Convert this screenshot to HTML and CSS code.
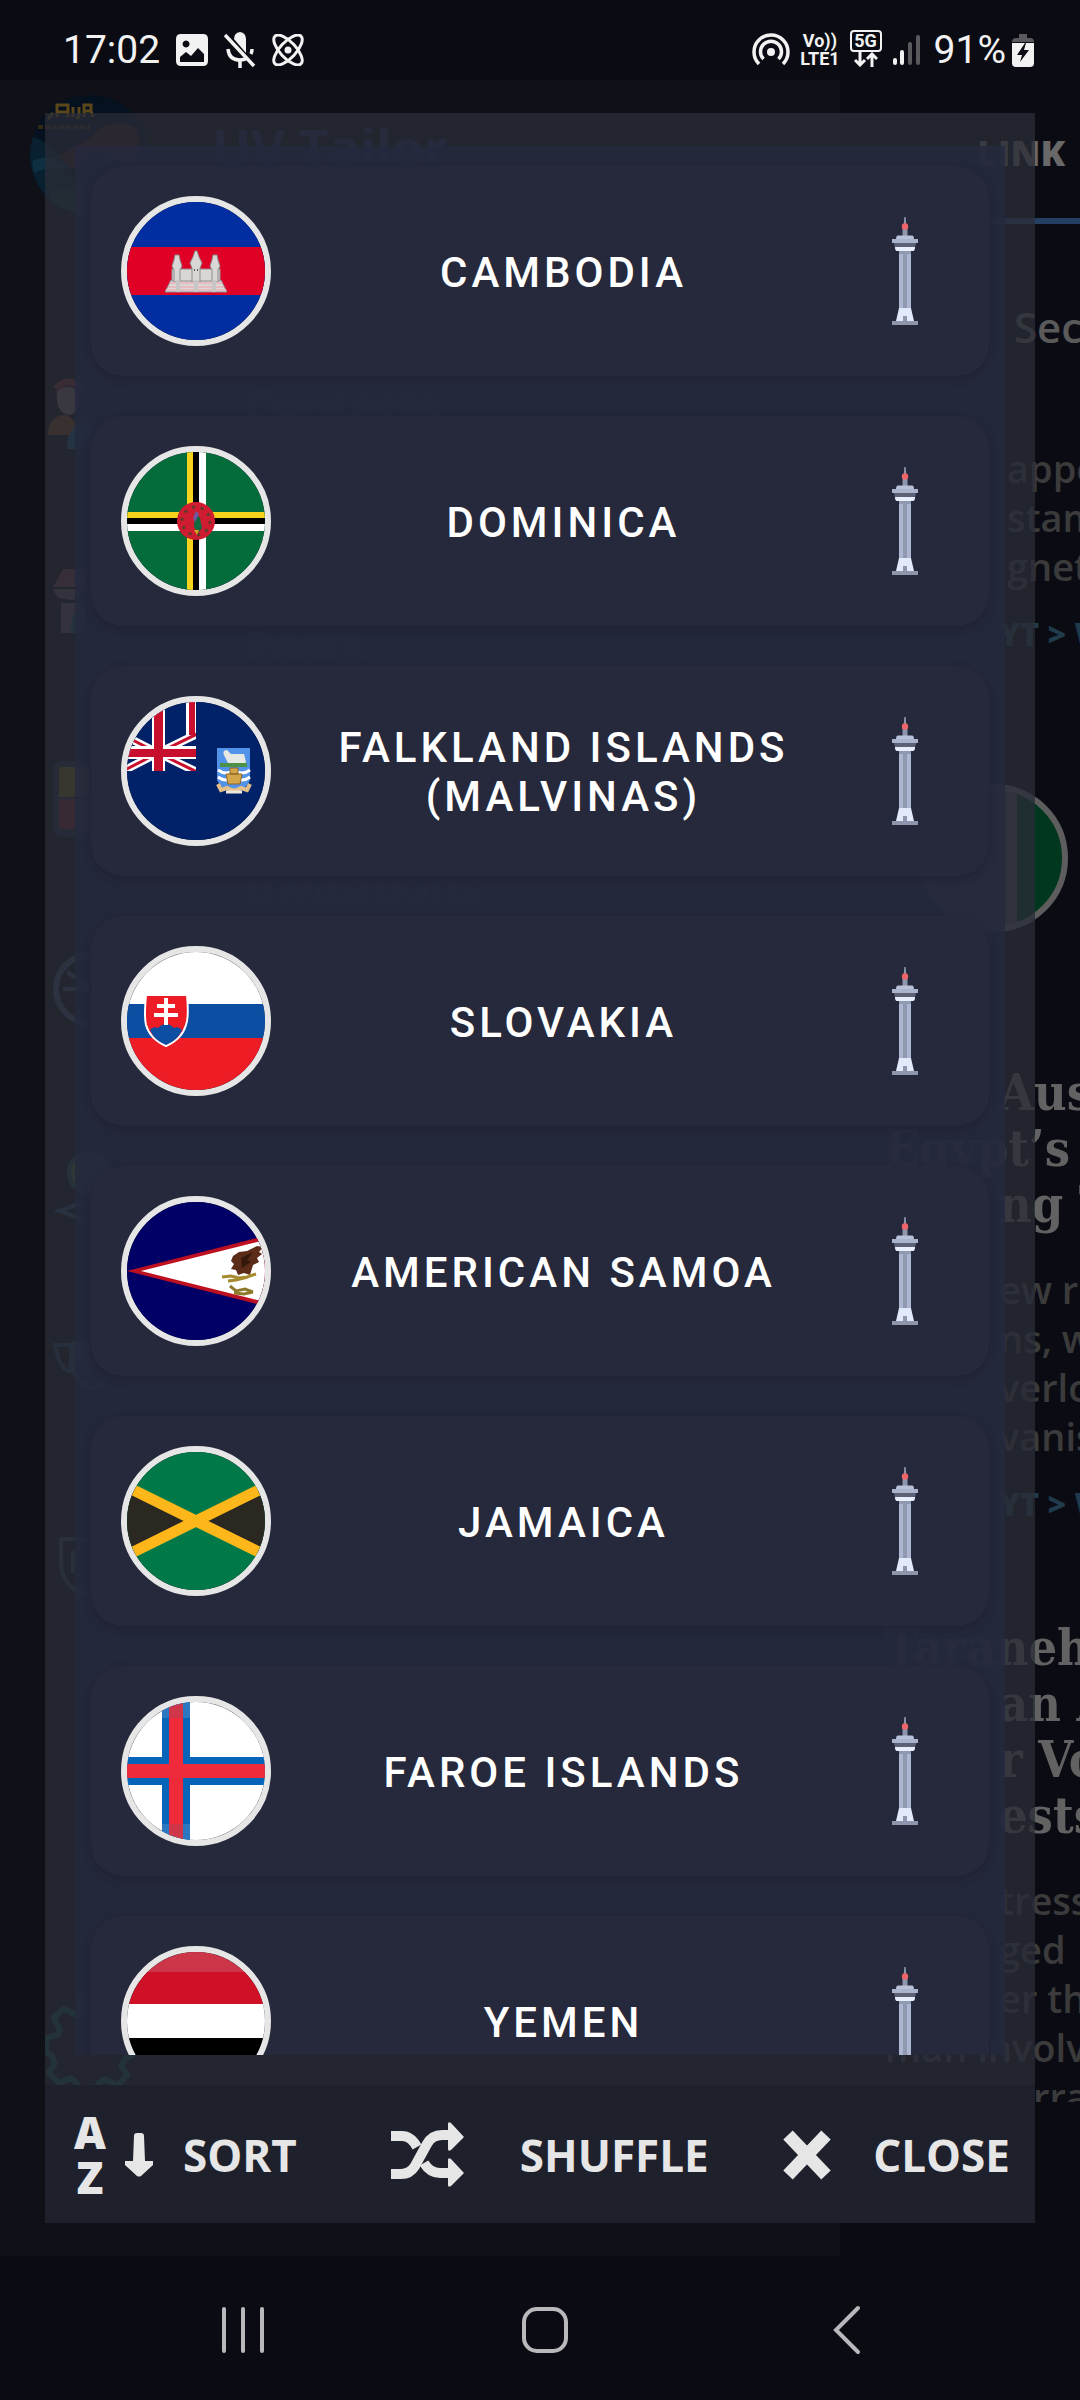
FILE: index.html
```html
<!DOCTYPE html>
<html lang="en">
<head>
  <meta charset="UTF-8">
  <meta name="viewport" content="width=device-width, initial-scale=1">
  <title>Countries</title>
  <link rel="stylesheet" href="styles.css">
</head>
<body>
  <!-- Shared symbols -->
  <svg class="symbols" aria-hidden="true">
    <symbol id="tower" viewBox="0 0 110 110">
      <path fill="#8d96ad" d="M54.3 1h1.4l.8 11h1v8h-5v-8h1z"/>
      <circle cx="55" cy="10.500" r="3.200" fill="#ee6468"/>
      <path fill="#b9c1d8" d="M48 19.500h14q2 0 2 4H46q0-4 2-4z"/>
      <path fill="#abb4cd" d="M42 23h26v4H42z"/>
      <path fill="#5c6175" d="M44 27h22l-.8 4H44.800z"/>
      <path fill="#e9eefc" d="M45 31h20q0 4-2 4H47q-2 0-2-4z"/>
      <path fill="#8f9ab2" d="M49 35h12v57H49z"/>
      <path fill="#adb6d1" d="M49 38h4v54h-4zM57 38h4v54h-4z"/>
      <path fill="#e2e9fa" d="M49 92h12l3 13H46z"/>
      <path fill="#8d96ad" d="M53 100h4v5h-4zM42 105h26v4H42z"/>
    </symbol>
  </svg>

  <!-- App behind the dialog -->
  <div class="app" aria-hidden="true">
    <div class="drawer">
      <div class="profile">
        <svg class="avatar" viewBox="0 0 120 120">
          <defs>
            <clipPath id="avatarClip"><circle cx="60" cy="60" r="60"/></clipPath>
          </defs>
          <g clip-path="url(#avatarClip)">
            <path fill="#06111f" d="M0 0h120v120H0z"/>
            <path fill="#08202f" d="M0 40q40 15 60 80H0z"/>
            <path fill="#0e3040" d="M2 66q20-10 38 8-20-4-36 4z"/>
            <path fill="#0c2c2d" d="M20 96q30-10 60 24H20z"/>
            <path fill="#2c161b" d="M58 45q20-25 48-12 8 20-4 40-30-25-48-12l-12 14-14-14z"/>
          </g>
          <path fill="none" stroke="#5b4719" stroke-width="3" d="M27 22V10h11v12M27 17h11M43 12v10M49 12v8q0 3-3 3M54 22V10h7v6h-7M61 16l2 6M23 18l-5 6"/>
          <path fill="none" stroke="#33290f" stroke-width="4" stroke-dasharray="5 2" d="M8 32h52"/>
        </svg>
        <span class="profile-name">UV Tailor</span>
      </div>
      <div class="menu">
        <div class="menu-icons">
          <svg viewBox="0 0 90 90">
            <path fill="#6c6064" d="M12 16q16-10 22 4 2 18-10 20-14-2-12-24z"/>
            <path fill="none" stroke="#6b2b31" stroke-width="7" d="M11 14q12-14 27 0"/>
            <path fill="#6d431d" d="M3 60q0-20 18-20 14 6 8 20z"/>
            <path fill="#174e68" d="M22 74q0-28 24-28v28z"/>
          </svg>
          <svg viewBox="0 0 90 90">
            <path fill="#5f3442" d="M18 2h22v18H8z"/>
            <path fill="#574852" d="M8 22h30q-4 14-16 10Q12 34 8 22zM16 36h22v30H16z"/>
            <path fill="#1d4c56" d="M26 66q-2-26 14-26v26z"/>
          </svg>
          <svg viewBox="0 0 90 90">
            <rect x="8" y="2" width="76" height="76" rx="8" fill="#1e2439"/>
            <path fill="#6a5a16" d="M14 8h30v30H14z"/>
            <path fill="#6a2432" d="M14 40h30v30H14z"/>
          </svg>
          <svg viewBox="0 0 90 90" fill="none" stroke="#3b465f">
            <circle cx="45" cy="38" r="34" stroke-width="6"/>
            <path stroke-width="4" d="M18 38h26M22 21l22 14"/>
          </svg>
          <svg viewBox="0 0 90 90">
            <circle cx="44" cy="30" r="20" fill="#3c5b30" stroke="#1c4541" stroke-width="4"/>
            <path fill="none" stroke="#22405d" stroke-width="4" d="M36 60L14 68l24 8"/>
          </svg>
          <svg viewBox="0 0 90 90" fill="none" stroke="#20364f">
            <path stroke-width="4" d="M10 10h16v26q-10 2-16-26zM28 8h34v36q-18 20-34-8z"/>
            <path fill="#20364f" d="M30 10h14v26q-12-2-14-26z"/>
          </svg>
          <svg viewBox="0 0 90 90" fill="none" stroke="#2b3d40" stroke-width="4">
            <path d="M16 12h58v24q0 24-29 34-29-10-29-34zM28 24v22"/>
          </svg>
        </div>
        <div class="menu-labels">
          <span>Contacts</span>
          <span>Posts</span>
          <span>Invitations</span>
        </div>
      </div>
      <svg class="gear" viewBox="0 0 92 92" fill="none" stroke="#124943" stroke-width="6" stroke-linejoin="round">
        <path d="M37 4h18l3 14 8 3 12-7 9 10-7 12 3 9 6 1v15l-7 3-4 8 6 9-10 10-13-6-6 4-3 11H36l-4-12-6-4-12 5-10-11 6-9-3-8-6-4V43l12-3 2-6-6-12 10-9 12 6 4-3z"/>
      </svg>
    </div>

    <div class="feed">
      <div class="feed-tab">LINK</div>
      <div class="feed-head">Secu</div>
      <p class="tail first">appe<br>stamp<br>gnet</p>
      <p class="source tail">YT &gt; Wo</p>
      <svg class="feed-flag" viewBox="0 0 150 150">
        <circle cx="75" cy="75" r="72" fill="#45464a"/>
        <path fill="#00371e" d="M98 10v130a69 69 0 0 0 0-130z"/>
        <circle cx="75" cy="75" r="71" fill="none" stroke="#5d5d5e" stroke-width="6"/>
      </svg>
      <h2><span class="tail">Aus</span><span>Egypt’s</span><span class="tail">ng T</span></h2>
      <p class="tail">ew ro<br>ns, w<br>verlo<br>vanis</p>
      <p class="source tail">YT &gt; Wo</p>
      <h2><span>Taraneh</span><span class="tail">an A</span><span class="tail">r Vo</span><span class="tail">ests</span></h2>
      <p class="last"><span class="tail">tress</span><span class="tail">ged</span><span class="tail">er th</span><span>man involv</span><span class="tail">n rrat</span></p>
    </div>
  </div>

  <div class="screen">
    <header class="status-bar">
      <div class="status-left">
        <span class="status-text">17:02</span>
        <svg width="32" height="32" viewBox="0 0 32 32">
          <path fill="#f2f2f2" fill-rule="evenodd" d="M5 0h22q5 0 5 5v22q0 5-5 5H5q-5 0-5-5V5q0-5 5-5zM10 6.500a3.500 3.500 0 1 0 .1 0zM4 23v5h24v-8l-6-6-7 8-5-4z"/>
        </svg>
        <svg width="32" height="36" viewBox="0 0 32 36" fill="none" stroke="#f2f2f2" stroke-width="3.500">
          <path fill="#f2f2f2" stroke="none" d="M10 7q0-6 6-7 6 1 6 7v14z"/>
          <path d="M4 17q1 11 12 11 5 0 8-3M28 17q0 3-1 5M16 28v8M1 3l29 31"/>
        </svg>
        <svg width="32" height="32" viewBox="0 0 32 32" fill="none" stroke="#f2f2f2" stroke-width="3">
          <ellipse cx="16" cy="16" rx="19" ry="8" transform="rotate(47 16 16)"/>
          <ellipse cx="16" cy="16" rx="19" ry="8" transform="rotate(-47 16 16)"/>
          <circle cx="16" cy="16" r="3.500" fill="#f2f2f2" stroke="none"/>
        </svg>
      </div>
      <div class="status-right">
        <svg width="38" height="34" viewBox="0 0 38 34" fill="none" stroke="#f2f2f2" stroke-width="3.500">
          <path d="M7 31a17 17 0 1 1 24 0"/>
          <path d="M11.500 26a10.500 10.500 0 1 1 15 0"/>
          <circle cx="19" cy="19" r="4" fill="#f2f2f2" stroke="none"/>
        </svg>
        <div class="volte"><span>Vo))</span><span>LTE1</span></div>
        <div class="net">
          <span>5G</span>
          <svg width="24" height="15" viewBox="0 0 24 15" fill="none" stroke="#f2f2f2" stroke-width="3">
            <path d="M6 0v13M1 8l5 5 5-5M18 15V2M13 7l5-5 5 5"/>
          </svg>
        </div>
        <svg width="28" height="32" viewBox="0 0 28 32" stroke-width="4" stroke-linecap="round">
          <path stroke="#f2f2f2" d="M3 26v3M10 18v11"/>
          <path stroke="#59595e" d="M18 10v19M26 3v26"/>
        </svg>
        <div class="battery">
          <span class="status-text">91%</span>
          <svg width="22" height="34" viewBox="0 0 22 34">
            <path fill="#59595e" d="M7 1h8v4h3q4 0 4 4H0q0-4 4-4h3z"/>
            <path fill="#f2f2f2" d="M0 10h22v20q0 4-4 4H4q-4 0-4-4z"/>
            <path fill="#0c0d14" d="M13 10L5 22h5l-2 7 9-12h-5l2-7z"/>
          </svg>
        </div>
      </div>
    </header>

    <main class="dialog" role="dialog" aria-label="Countries">
      <div class="dialog-body">
        <ul class="country-list">
          <li class="card">
            <svg class="flag" viewBox="0 0 138 138">
              <path fill="#032ea1" d="M0 0h138v138H0z"/>
              <path fill="#e00025" d="M0 45h138v48H0z"/>
              <g fill="#d9d6d6" stroke="#8d8d8d">
                <path d="M44 78h50l6 12H38z"/>
                <path d="M45 67h48v12H45z"/>
                <path d="M47 80V68l-2-4 2-6 1-5h4l1 5 2 6-2 4v12zM85 80V68l-2-4 2-6 1-5h4l1 5 2 6-2 4v12zM65 80V66l-2-5 3-6 2-6h2l2 6 3 6-2 5v14z"/>
              </g>
              <path stroke="#e7bcc1" stroke-width="2" d="M43 81h52M41 85h56M39 88h60"/>
              <path fill="#c6c6c6" d="M49 78h4v12h-4zM67 78h4v12h-4zM85 78h4v12h-4z"/>
              <path fill="#555" d="M67 67h1v2h-1zM70 67h1v2h-1z"/>
            </svg>
            <span class="name">Cambodia</span>
            <svg class="landmark"><use href="#tower"/></svg>
          </li>
          <li class="card">
            <svg class="flag" viewBox="0 0 138 138">
              <path fill="#046b3b" d="M0 0h138v138H0z"/>
              <path fill="#f8d31e" d="M60 0h6v138h-6zM0 60h138v6H0z"/>
              <path fill="#fff" d="M72 0h7v138h-7zM0 72h138v7H0z"/>
              <path fill="#000" d="M66 0h6v138h-6zM0 66h138v6H0z"/>
              <circle cx="69" cy="69" r="19" fill="#d01c31"/>
              <circle cx="69" cy="69" r="14" fill="none" stroke="#5f3b2c" stroke-width="3" stroke-dasharray="3 5.800"/>
              <path fill="#13693f" d="M68 60l5 6 2 10-4 5-4-6z"/>
              <path fill="#7457a0" d="M69 59l3 3-4 8-2-4z"/>
              <path fill="#d3a51e" d="M67 78h5l-2 5z"/>
            </svg>
            <span class="name">Dominica</span>
            <svg class="landmark"><use href="#tower"/></svg>
          </li>
          <li class="card">
            <svg class="flag" viewBox="0 0 138 138">
              <defs>
                <clipPath id="canton"><path d="M0 0h69v69H0z"/></clipPath>
              </defs>
              <path fill="#012169" d="M0 0h138v138H0z"/>
              <g clip-path="url(#canton)">
                <path fill="#fff" d="M59 0h10v34H59z"/>
                <path stroke="#fff" stroke-width="8" d="M31 51L72 31M31 51L-8 31M31 51L72 71M31 51L-8 71"/>
                <path fill="#c8102e" d="M62 0h6v33h-6z"/>
                <path stroke="#c8102e" stroke-width="3" d="M31 51L70 32M31 51L-8 31M31 51L72 71M31 51L-8 71"/>
                <path fill="#fff" d="M25 0h13v69H25zM0 44h69v13H0z"/>
                <path fill="#c8102e" d="M27 0h9v69h-9zM0 47h69v8H0z"/>
              </g>
              <path fill="#5193e8" d="M90 46h33v32q-4 10-16 13-13-3-17-13z"/>
              <path fill="#e6e8e4" d="M97 53q-2-5 3-5l4 4h13l2 8-2 3h-15z"/>
              <path fill="#4d9048" d="M93 61h27v4H93z"/>
              <path fill="none" stroke="#fff" stroke-width="3" d="M91 68q8 6 16 0 8 6 16 0M91 75q8 6 16 0 8 6 16 0"/>
              <path fill="#d3a64a" stroke="#8b6428" d="M99 72h16l-2 10h-12zM103 66h8v6h-8z"/>
              <path fill="none" stroke="#e3c08a" stroke-width="4" d="M91 82l3 6 6-2q7 5 14 0l6 2 3-6"/>
              <path stroke="#efe9dc" stroke-width="3" d="M99 90h16"/>
            </svg>
            <span class="name">Falkland Islands (Malvinas)</span>
            <svg class="landmark"><use href="#tower"/></svg>
          </li>
          <li class="card">
            <svg class="flag" viewBox="0 0 138 138">
              <path fill="#fff" d="M0 0h138v52H0z"/>
              <path fill="#0b4ea2" d="M0 52h138v34H0z"/>
              <path fill="#ee1c25" d="M0 86h138v52H0z"/>
              <path fill="#ee1c25" stroke="#fff" stroke-width="2" d="M19 43h41q2 22-1 30-4 14-20 21-16-7-20-21-2-8 0-30z"/>
              <path fill="#0b4ea2" d="M23 78q3-4 8-2 8-8 16 0 5-2 8 2-4 10-16 15-12-5-16-15z"/>
              <path stroke="#fff" stroke-width="4" d="M39 46v27M30 54h18M27 63h24"/>
            </svg>
            <span class="name">Slovakia</span>
            <svg class="landmark"><use href="#tower"/></svg>
          </li>
          <li class="card">
            <svg class="flag" viewBox="0 0 138 138">
              <path fill="#000066" d="M0 0h138v138H0z"/>
              <path fill="#bd1021" d="M0 69L138 34v70z"/>
              <path fill="#fff" d="M14 69l124-31v62z"/>
              <path fill="#5b2c17" d="M106 54l6-4 8-1 10-5 6 1-4 5 3 2-5 4 2 4-6 3-3 10-6-2-6 2-2-5-5-1 3-5-3-3z"/>
              <path fill="#35180c" d="M114 56l12-6-6 8 4 2-9 6z"/>
              <path fill="none" stroke="#a58a2e" stroke-width="3" d="M95 75l9-1 8 2 8-1 9-3M101 79l8-1 12-3"/>
              <path fill="none" stroke="#8f7a2c" stroke-width="3" d="M103 84l6 5 9-2 8 3M107 91l10 1 9-2"/>
            </svg>
            <span class="name">American Samoa</span>
            <svg class="landmark"><use href="#tower"/></svg>
          </li>
          <li class="card">
            <svg class="flag" viewBox="0 0 138 138">
              <path fill="#007847" d="M0 0h138v138H0z"/>
              <path fill="#2b2822" d="M0 35l69 34-69 34zM138 35L69 69l69 34z"/>
              <path stroke="#fdb71a" stroke-width="11" d="M-8 31l154 76M-8 107l154-76"/>
            </svg>
            <span class="name">Jamaica</span>
            <svg class="landmark"><use href="#tower"/></svg>
          </li>
          <li class="card">
            <svg class="flag" viewBox="0 0 138 138">
              <path fill="#fff" d="M0 0h138v138H0z"/>
              <path fill="#0665b8" d="M35 0h28v138H35zM0 55h138v28H0z"/>
              <path fill="#ef2a3a" d="M42 0h14v138H42zM0 62h138v14H0z"/>
              <path fill="#2b78c0" d="M35 0h28v16H35zM35 122h28v16H35z"/>
              <path fill="#cf364a" d="M42 0h14v16H42zM42 122h14v16H42z"/>
            </svg>
            <span class="name">Faroe Islands</span>
            <svg class="landmark"><use href="#tower"/></svg>
          </li>
          <li class="card">
            <svg class="flag" viewBox="0 0 138 138">
              <path fill="#cd3548" d="M0 0h138v20H0z"/>
              <path fill="#ce1126" d="M0 20h138v32H0z"/>
              <path fill="#fff" d="M0 52h138v34H0z"/>
              <path fill="#000" d="M0 86h138v52H0z"/>
            </svg>
            <span class="name">Yemen</span>
            <svg class="landmark"><use href="#tower"/></svg>
          </li>
        </ul>
      </div>

      <footer class="actions">
        <button type="button" class="action sort">
          <span class="az"><span>A</span><span>Z</span></span>
          <svg width="28" height="44" viewBox="0 0 28 44"><path fill="#e6e6e6" d="M9 3q0-3 3-3h4q3 0 3 3l1 25h8v4L16 43q-2 1-4 0L0 32v-4h8z"/></svg>
          <span class="label">Sort</span>
        </button>
        <button type="button" class="action shuffle">
          <svg width="73" height="66" viewBox="0 0 73 66">
            <g fill="none" stroke="#e6e6e6" stroke-width="10">
              <path d="M0 52h10q9 0 14-8L36 22q5-9 15-9h8"/>
              <path d="M0 14h11q9 0 15 11M33 41q6 10 16 10h10"/>
            </g>
            <path fill="#e6e6e6" d="M57 2q0-3 3-1l13 14-13 13q-3 2-3-1zM57 38q0-3 3-1l13 14-13 13q-3 2-3-1z"/>
          </svg>
          <span class="label">Shuffle</span>
        </button>
        <button type="button" class="action close">
          <svg width="48" height="50" viewBox="0 0 48 50"><path stroke="#e6e6e6" stroke-width="13" d="M5 5l38 40M43 5L5 45"/></svg>
          <span class="label">Close</span>
        </button>
      </footer>
    </main>

    <nav class="nav-bar">
      <button type="button" aria-label="Recents">
        <svg width="44" height="46" viewBox="0 0 44 46" stroke="#b9b9bb" stroke-width="4" stroke-linecap="round"><path d="M3 2v42M22 2v42M41 2v42"/></svg>
      </button>
      <button type="button" aria-label="Home">
        <svg width="48" height="48" viewBox="0 0 48 48" fill="none" stroke="#b9b9bb" stroke-width="4"><rect x="3" y="3" width="42" height="42" rx="13"/></svg>
      </button>
      <button type="button" aria-label="Back">
        <svg width="28" height="50" viewBox="0 0 28 50" fill="none" stroke="#b9b9bb" stroke-width="4" stroke-linecap="round"><path d="M25 3L3 25l22 22"/></svg>
      </button>
    </nav>
  </div>
</body>
</html>
```

FILE: styles.css
```css
* {
  box-sizing: border-box;
}

body {
  margin: 0;
  background: #0b0c13;
  font-family: Roboto, 'Liberation Sans', sans-serif;
  overflow: hidden;
}

ul,
p,
h2 {
  margin: 0;
  padding: 0;
}

svg {
  display: block;
  flex-shrink: 0;
}

button {
  padding: 0;
  border: none;
  background: none;
  color: inherit;
  font: inherit;
  cursor: pointer;
}

.symbols {
  position: absolute;
  width: 0;
  height: 0;
}

/* App behind the dialog */
.app {
  position: absolute;
  inset: 0;
  display: flex;
  padding: 80px 0 144px;
  overflow: hidden;
  font-family: 'Open Sans', sans-serif;
}

.drawer {
  display: flex;
  flex-direction: column;
  flex: 0 0 840px;
  background: #0f1018;
}

.profile {
  display: flex;
  gap: 62px;
  padding: 15px 30px 0;
}

.avatar {
  width: 120px;
  height: 120px;
}

.profile-name {
  padding-top: 16px;
  color: #211f55;
  font-size: 52px;
  font-weight: 700;
  line-height: 72px;
}

.menu {
  display: flex;
  gap: 110px;
  padding: 160px 45px 0;
}

.menu-icons {
  display: flex;
  flex-direction: column;
  gap: 102px;
}

.menu-icons svg,
.gear {
  width: 90px;
  height: 90px;
}

.menu-labels {
  display: flex;
  flex-direction: column;
  gap: 180px;
  color: #33302f;
  font-size: 46px;
  font-weight: 600;
  line-height: 60px;
}

.gear {
  margin: auto 45px 170px;
}

.feed {
  flex: 1;
  min-width: 0;
  padding-left: 45px;
  color: #3b3b3c;
  font-size: 38px;
  font-weight: 600;
  line-height: 49px;
  white-space: nowrap;
}

.feed-tab {
  height: 144px;
  padding: 48px 0 0 92px;
  border-bottom: 6px solid #253f63;
  color: #686868;
  font-size: 36px;
  font-weight: 800;
}

.feed-head {
  height: 174px;
  padding: 78px 0 0 129px;
  color: #5a5a5b;
  font-size: 42px;
}

.tail {
  padding-left: 114px;
}

.feed .first {
  padding: 46px 0 0 122px;
}

.feed .source {
  padding-top: 18px;
  color: #203b4b;
  font-size: 32px;
  font-weight: 800;
}

.feed-flag {
  width: 150px;
  height: 150px;
  margin: 125px 0 132px 34px;
}

.feed h2 {
  color: #626262;
  font-family: 'DejaVu Serif Condensed', 'DejaVu Serif', serif;
  font-size: 50px;
  font-weight: 700;
  line-height: 56px;
}

.feed h2 span,
.last span {
  display: block;
}

.feed h2 + p {
  padding-top: 32px;
}

.source + h2 {
  margin-top: 92px;
}

.feed .last {
  max-height: 258px;
  overflow: hidden;
}

/* Foreground */
.screen {
  position: relative;
  display: flex;
  flex-direction: column;
  height: 100vh;
}

.status-bar {
  display: flex;
  justify-content: space-between;
  align-items: center;
  height: 98px;
  margin-bottom: 15px;
  padding: 2px 46px 0 63px;
  color: #f2f2f2;
}

.status-left,
.status-right,
.battery {
  display: flex;
  align-items: center;
}

.status-left {
  gap: 16px;
}

.status-right {
  gap: 10px;
}

.battery {
  gap: 6px;
  margin-left: 4px;
}

.status-text {
  font-size: 39px;
  line-height: 48px;
}

.volte {
  display: flex;
  flex-direction: column;
  align-items: center;
  font-size: 18px;
  font-weight: 700;
  line-height: 18px;
}

.net {
  display: flex;
  flex-direction: column;
  align-items: center;
  margin-bottom: 4px;
}

.net span {
  width: 32px;
  border: 2px solid #f2f2f2;
  border-radius: 4px;
  font-size: 18px;
  font-weight: 700;
  line-height: 18px;
  text-align: center;
}

.dialog {
  display: flex;
  flex: 1;
  flex-direction: column;
  min-height: 0;
  margin: 0 45px;
}

.dialog-body {
  display: flex;
  flex: 1;
  min-height: 0;
  padding: 33px 30px 30px;
  background: rgba(41, 44, 55, 0.77);
}

.country-list {
  display: flex;
  flex: 1;
  flex-direction: column;
  gap: 40px;
  padding: 20px 16px;
  background: rgba(37, 41, 61, 0.87);
  overflow-y: auto;
  scrollbar-width: none;
  list-style: none;
}

.card {
  display: flex;
  flex-shrink: 0;
  align-items: center;
  padding: 30px 29px 30px 30px;
  border-radius: 32px;
  background: #25293b;
  box-shadow: 0 3px 8px rgba(28, 24, 38, 0.4);
}

.flag {
  width: 150px;
  height: 150px;
  border: 6px solid #e6e6e6;
  border-radius: 50%;
  overflow: hidden;
}

.name {
  flex: 1;
  padding: 2px 57px 0 63px;
  color: #fff;
  font-size: 42px;
  font-weight: 500;
  letter-spacing: 4px;
  line-height: 49px;
  text-align: center;
  text-transform: uppercase;
}

.landmark {
  width: 110px;
  height: 110px;
}

.actions {
  display: flex;
  align-items: center;
  height: 138px;
  padding: 2px 25px 0 30px;
  background: #1e212c;
  color: #e6e6e6;
  font-family: 'Open Sans', sans-serif;
}

.action {
  display: flex;
  align-items: center;
}

.action .label {
  font-size: 44px;
  font-weight: 700;
  line-height: 50px;
  text-transform: uppercase;
}

.az {
  display: flex;
  flex-direction: column;
  align-items: center;
  width: 30px;
  margin-right: 20px;
  font-size: 44px;
  font-weight: 800;
  line-height: 45px;
}

.sort .label {
  margin-left: 30px;
}

.shuffle {
  margin-left: 94px;
}

.shuffle .label {
  margin-left: 56px;
}

.close {
  margin-left: auto;
}

.close .label {
  margin-left: 42px;
}

.nav-bar {
  display: flex;
  height: 144px;
  margin-top: 33px;
  padding: 4px 82px 0 92px;
}

.nav-bar button {
  display: flex;
  flex: 1;
  align-items: center;
  justify-content: center;
}
```
